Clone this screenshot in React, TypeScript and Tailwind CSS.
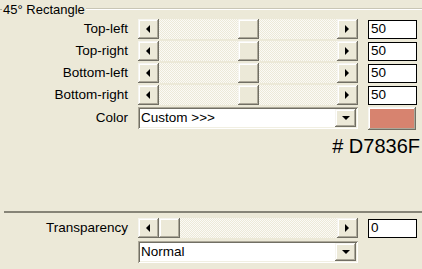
import React from 'react';

const raised =
    'shadow-[inset_-1px_-1px_#716f64,inset_1px_1px_#f6f5f0,inset_-2px_-2px_#aca899,inset_2px_2px_#ffffff]';
const sunken =
    'shadow-[inset_1px_1px_#aca899,inset_-1px_-1px_#ffffff,inset_2px_2px_#716f64,inset_-2px_-2px_#f1efe2]';

const Arrow: React.FC<{ dir: 'left' | 'right' | 'down' }> = ({ dir }) => {
    if (dir === 'down') {
        return (
            <svg width="8" height="4" viewBox="0 0 8 4">
                <path d="M0 0H8L4 4Z" fill="#000" />
            </svg>
        );
    }
    return (
        <svg width="4" height="8" viewBox="0 0 4 8">
            <path d={dir === 'left' ? 'M4 0V8L0 4Z' : 'M0 0V8L4 4Z'} fill="#000" />
        </svg>
    );
};

const ScrollBar: React.FC<{ thumb: number }> = ({ thumb }) => (
    <div className="flex w-[220px] h-[20px]">
        <div className={`w-[21px] h-full flex items-center justify-center pr-[1px] bg-[#ece9d8] ${raised}`}>
            <Arrow dir="left" />
        </div>
        <div className="relative flex-1 h-full bg-[repeating-conic-gradient(#fbfaf6_0_25%,#ece9d8_0_50%)] bg-[length:2px_2px]">
            <div className={`absolute top-0 w-[21px] h-full bg-[#ece9d8] ${raised}`} style={{ left: thumb }} />
        </div>
        <div className={`w-[21px] h-full flex items-center justify-center pr-[1px] bg-[#ece9d8] ${raised}`}>
            <Arrow dir="right" />
        </div>
    </div>
);

const Dropdown: React.FC<{ value: string }> = ({ value }) => (
    <div className={`w-[220px] h-[22px] bg-white flex items-center pl-[3px] pr-[2px] ${sunken}`}>
        <span className="flex-1 text-[13.5px] leading-none">{value}</span>
        <div className={`w-[21px] h-[18px] flex items-center justify-center bg-[#ece9d8] ${raised}`}>
            <Arrow dir="down" />
        </div>
    </div>
);

const SliderRow: React.FC<{ label: string; value: string; thumb: number }> = ({ label, value, thumb }) => (
    <div className="flex items-center h-[20px]">
        <span className="w-[128px] text-right text-[13.5px] leading-none">{label}</span>
        <div className="ml-[10px]">
            <ScrollBar thumb={thumb} />
        </div>
        <div className="ml-[10px] w-[49px] h-[19px] bg-white border border-black flex items-center pl-[2px] text-[13.5px] leading-none">
            {value}
        </div>
    </div>
);

export default function App() {
    const corners = ['Top-left', 'Top-right', 'Bottom-left', 'Bottom-right'];

    return (
        <div className="w-[422px] h-[269px] overflow-hidden bg-[#ece9d8] text-black font-['Liberation_Sans',Arial,sans-serif] flex flex-col">
            <div className="flex items-center h-[16px] mt-[1px]">
                <div className="w-[2px] border-t border-[#aca899]" />
                <span className="px-[1px] text-[13px] leading-none">45° Rectangle</span>
                <div className="flex-1 border-t border-[#c9c6b5] border-b border-b-white" />
            </div>

            <div className="flex flex-col gap-[2px] mt-[2px]">
                {corners.map((c) => (
                    <SliderRow key={c} label={c} value="50" thumb={79} />
                ))}
                <div className="flex items-center h-[22px]">
                    <span className="w-[128px] text-right text-[13.5px] leading-none">Color</span>
                    <div className="ml-[10px]">
                        <Dropdown value="Custom >>>" />
                    </div>
                    <div className={`ml-[10px] w-[48px] h-[23px] bg-[#ece9d8] p-[2px] ${raised}`}>
                        <div className="w-full h-full bg-[#d7836f]" />
                    </div>
                </div>
            </div>

            <div className="mt-[7px] pr-[2px] text-right text-[20px] leading-[20px]">
                # D7836F
            </div>

            <div className="mt-[55px] ml-[4px] h-[2px] bg-[#868477]" />

            <div className="mt-[5px] flex flex-col gap-[3px]">
                <SliderRow label="Transparency" value="0" thumb={0} />
                <div className="ml-[138px]">
                    <Dropdown value="Normal" />
                </div>
            </div>
        </div>
    );
}
